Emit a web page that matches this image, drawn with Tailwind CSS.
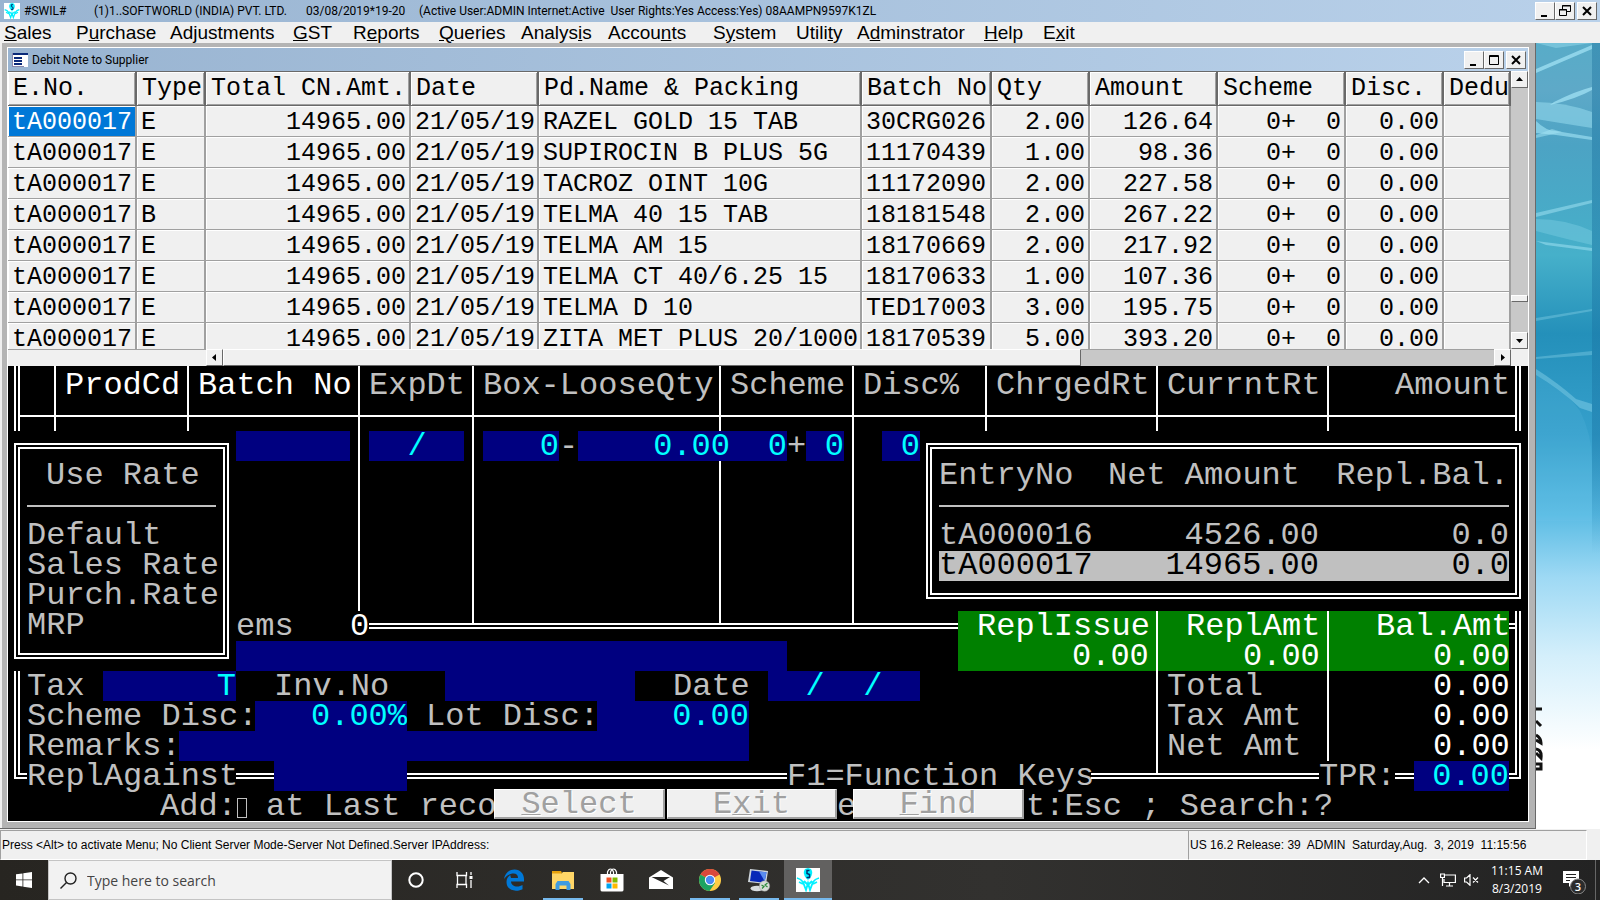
<!DOCTYPE html>
<html lang="en">
<head>
<meta charset="utf-8">
<title>#SWIL# - Debit Note to Supplier</title>
<script src="https://cdn.jsdelivr.net/npm/@tailwindcss/browser@4"></script>
</head>
<body class="flex min-h-screen flex-col overflow-hidden bg-[#f0f0f0] text-black">

<svg class="hidden">
  <symbol id="swil" viewBox="0 0 24 24">
    <rect width="24" height="24" fill="#fff"/>
    <path d="M9 1q-3 4 1 9l2 2 2-2q4-5 1-9l-3-1z" fill="#00f0ff"/>
    <path d="M13.500 2.500h-2.500v3l2.500 1v3h-3" fill="none" stroke="#003070" stroke-width="1.500"/>
    <path d="M1 10q4 1 6 4l3 8 2-7 2 7 3-8q2-3 6-4M3 14l4 2M21 14l-4 2M8 13l3 3M16 13l-3 3" fill="none" stroke="#00f0ff" stroke-width="1.800"/>
  </symbol>
</svg>

<!-- application title bar -->
<header class="flex h-[22px] items-center bg-linear-to-r from-[#99b4d1] to-[#b9d1ea] pl-1 pr-[3px] font-[Roboto,sans-serif] text-[12px]">
  <svg class="mr-1 size-4"><use href="#swil"/></svg>
  <span class="w-[70px]">#SWIL#</span>
  <span class="w-[212px] whitespace-nowrap">(1)1..SOFTWORLD (INDIA) PVT. LTD.</span>
  <span class="w-[113px]">03/08/2019*19-20</span>
  <span class="flex-1 whitespace-pre">(Active User:ADMIN Internet:Active  User Rights:Yes Access:Yes) 08AAMPN9597K1ZL</span>
  <button aria-label="Minimize" class="flex h-[18px] w-5 border border-t-white border-l-white border-r-[#696969] border-b-[#696969] bg-[#f0f0f0]"><svg viewBox="0 0 18 16"><path d="M5 12h6v2H5z"/></svg></button>
  <button aria-label="Restore" class="mr-0.5 flex h-[18px] w-5 border border-t-white border-l-white border-r-[#696969] border-b-[#696969] bg-[#f0f0f0]"><svg viewBox="0 0 18 16"><path d="M6.500 6V2.500h8v6H11M6 3h9M3.500 6.500h7v6h-7zM3 7h8" fill="none" stroke="#000"/></svg></button>
  <button aria-label="Close" class="flex h-[18px] w-5 border border-t-white border-l-white border-r-[#696969] border-b-[#696969] bg-[#f0f0f0]"><svg viewBox="0 0 18 16"><path d="M5 4l8 8M13 4l-8 8" stroke="#000" stroke-width="2"/></svg></button>
</header>

<!-- main menu -->
<nav class="flex h-[21px] items-center pl-1 font-['Liberation_Sans',sans-serif] text-[19px] leading-5">
  <a href="#" class="w-[72px]"><u>S</u>ales</a>
  <a href="#" class="w-[94px]">P<u>u</u>rchase</a>
  <a href="#" class="w-[123px]">Ad<u>j</u>ustments</a>
  <a href="#" class="w-[60px]"><u>G</u>ST</a>
  <a href="#" class="w-[86px]">R<u>e</u>ports</a>
  <a href="#" class="w-[82px]"><u>Q</u>ueries</a>
  <a href="#" class="w-[87px]">Analys<u>i</u>s</a>
  <a href="#" class="w-[105px]">Accou<u>n</u>ts</a>
  <a href="#" class="w-[83px]">S<u>y</u>stem</a>
  <a href="#" class="w-[61px]">Utili<u>t</u>y</a>
  <a href="#" class="w-[127px]">A<u>d</u>minstrator</a>
  <a href="#" class="w-[59px]"><u>H</u>elp</a>
  <a href="#">E<u>x</u>it</a>
</nav>

<!-- desktop with the child window -->
<main class="relative flex flex-1">
  <svg class="absolute inset-y-0 right-0 h-full w-16" viewBox="0 0 64 786" preserveAspectRatio="none">
    <defs>
      <linearGradient id="sky" x1="0" y1="0" x2="0" y2="1">
        <stop offset="0" stop-color="#58acc8"/><stop offset=".06" stop-color="#5ea9c8"/><stop offset=".13" stop-color="#4ca3c4"/>
        <stop offset=".27" stop-color="#46b0ca"/><stop offset=".37" stop-color="#2490ba"/><stop offset=".5" stop-color="#36a0cc"/>
        <stop offset=".6" stop-color="#5bbce4"/><stop offset=".68" stop-color="#9ed9f4"/><stop offset=".78" stop-color="#d4effb"/><stop offset=".9" stop-color="#fff"/>
      </linearGradient>
      <linearGradient id="edge" x1="0" y1="0" x2="0" y2="1">
        <stop offset="0" stop-color="#1a6f9c" stop-opacity=".4"/><stop offset=".5" stop-color="#1a78a8" stop-opacity=".5"/><stop offset=".65" stop-color="#1a78a8" stop-opacity="0"/>
      </linearGradient>
    </defs>
    <rect width="64" height="786" fill="url(#sky)"/>
    <g fill="#a5e6f6">
      <path d="M0 26L56 2v4L0 30z" opacity=".7"/><path d="M0 0h56L20 5z" opacity=".4"/>
      <path d="M18 59Q40 48 56 44v3Q40 56 14 62z" opacity=".7"/>
      <path d="M0 59q28 0 56 10v16Q24 80 0 76z" opacity=".45"/>
      <path d="M0 78q10 10 20 10l36 6v3L20 92 0 90z" opacity=".6"/><path d="M0 92l16-6 10 3-26 6z" opacity=".5"/>
      <path d="M0 170L56 157v3L0 174z" opacity=".5"/><path d="M0 176q30 0 56 12v14Q30 196 0 188z" opacity=".25"/>
      <path d="M0 198l56 7v3L10 202z" opacity=".5"/><path d="M0 275l56-9v2L0 278zM0 314l56-6v4L0 316z" opacity=".3"/>
      <path d="M0 326q22 14 40 30l16 5v8l-12-4Q24 346 0 332z" opacity=".35"/>
    </g>
    <path d="M0 332q30 16 44 36 12 24 12 50v60H0z" fill="#7fd0ee" opacity=".12"/>
    <rect x="56" width="8" height="786" fill="url(#edge)"/>
    <g fill="none" stroke="#111" stroke-width="3"><path d="M0 666h6M0 678l5 5M0 692q5 3 5 8l-5-3M0 706q6 1 5 9l-5-5M0 721h5v5H0"/></g>
  </svg>

  <section class="relative mr-16 flex min-w-0 flex-1 flex-col border-r border-b border-[#696969] bg-[#b4b4b4] pr-1.5 pb-1.5 shadow-[inset_2px_0_#efefef]">
    <div class="mt-1 ml-[7px] flex flex-1 flex-col border border-white">

      <div class="flex h-[23px] items-center bg-linear-to-r from-[#99b4d1] to-[#b9d1ea] pl-1 pr-0.5 font-[Roboto,sans-serif] text-[12px]">
        <svg class="mr-1 h-[14px] w-4" viewBox="0 0 16 14"><rect width="16" height="14" fill="#fff"/><path d="M0 0h16v2H0z" fill="#0a2a7a"/><path d="M0 0h1v14H0zM0 13h12v1H0z" fill="#88a"/><path d="M2 4h8v2H2zM2 7h8v2H2zM2 10h8v2H2z" fill="#0a2a7a"/></svg>
        <h1 class="flex-1">Debit Note to Supplier</h1>
        <button aria-label="Minimize window" class="flex h-[18px] w-5 border border-t-white border-l-white border-r-[#696969] border-b-[#696969] bg-[#f0f0f0]"><svg viewBox="0 0 18 16"><path d="M5 12h6v2H5z"/></svg></button>
        <button aria-label="Maximize window" class="mr-0.5 flex h-[18px] w-5 border border-t-white border-l-white border-r-[#696969] border-b-[#696969] bg-[#f0f0f0]"><svg viewBox="0 0 18 16"><path d="M4.500 3.500h9v9h-9zM4 4.500h10" fill="none" stroke="#000"/></svg></button>
        <button aria-label="Close window" class="flex h-[18px] w-5 border border-t-white border-l-white border-r-[#696969] border-b-[#696969] bg-[#f0f0f0]"><svg viewBox="0 0 18 16"><path d="M5 4l8 8M13 4l-8 8" stroke="#000" stroke-width="2"/></svg></button>
      </div>

      <!-- browse list -->
      <div class="flex h-[278px] bg-[#f0f0f0]">
        <div class="min-w-0 flex-1 overflow-hidden">
          <table class="w-full table-fixed border-separate border-spacing-0 whitespace-pre font-['Liberation_Mono',monospace] text-[25px] leading-[27px] [&_td]:h-[31px] [&_td]:border-r-2 [&_td]:border-b [&_td]:border-[#a0a0a0] [&_td]:pt-[3px] [&_td]:pb-0 [&_td]:pr-[3px] [&_td]:pl-1 [&_td]:shadow-[inset_1px_1px_#fff] [&_th]:h-[35px] [&_th]:border-r-2 [&_th]:border-y [&_th]:border-[#696969] [&_th]:py-0 [&_th]:pr-0 [&_th]:pl-[5px] [&_th]:text-left [&_th]:font-normal [&_th]:shadow-[inset_1px_1px_#fff,inset_-1px_-1px_#a0a0a0]">
            <colgroup><col class="w-[129px]"><col class="w-[69px]"><col class="w-[205px]"><col class="w-[128px]"><col class="w-[323px]"><col class="w-[130px]"><col class="w-[98px]"><col class="w-[128px]"><col class="w-[128px]"><col class="w-[98px]"><col></colgroup>
            <thead><tr><th>E.No.</th><th>Type</th><th>Total CN.Amt.</th><th>Date</th><th>Pd.Name &amp; Packing</th><th>Batch No</th><th>Qty</th><th>Amount</th><th>Scheme</th><th>Disc.</th><th>Dedu</th></tr></thead>
            <tbody class="[&_td:nth-child(3)]:text-right [&_td:nth-child(7)]:text-right [&_td:nth-child(8)]:text-right [&_td:nth-child(9)]:text-right [&_td:nth-child(10)]:text-right">
              <tr><td class="bg-[#0078d7] text-white">tA000017</td><td>E</td><td>14965.00</td><td>21/05/19</td><td>RAZEL GOLD 15 TAB</td><td>30CRG026</td><td>2.00</td><td>126.64</td><td>0+  0</td><td>0.00</td><td></td></tr>
              <tr><td>tA000017</td><td>E</td><td>14965.00</td><td>21/05/19</td><td>SUPIROCIN B PLUS 5G</td><td>11170439</td><td>1.00</td><td>98.36</td><td>0+  0</td><td>0.00</td><td></td></tr>
              <tr><td>tA000017</td><td>E</td><td>14965.00</td><td>21/05/19</td><td>TACROZ OINT 10G</td><td>11172090</td><td>2.00</td><td>227.58</td><td>0+  0</td><td>0.00</td><td></td></tr>
              <tr><td>tA000017</td><td>B</td><td>14965.00</td><td>21/05/19</td><td>TELMA 40 15 TAB</td><td>18181548</td><td>2.00</td><td>267.22</td><td>0+  0</td><td>0.00</td><td></td></tr>
              <tr><td>tA000017</td><td>E</td><td>14965.00</td><td>21/05/19</td><td>TELMA AM 15</td><td>18170669</td><td>2.00</td><td>217.92</td><td>0+  0</td><td>0.00</td><td></td></tr>
              <tr><td>tA000017</td><td>E</td><td>14965.00</td><td>21/05/19</td><td>TELMA CT 40/6.25 15</td><td>18170633</td><td>1.00</td><td>107.36</td><td>0+  0</td><td>0.00</td><td></td></tr>
              <tr><td>tA000017</td><td>E</td><td>14965.00</td><td>21/05/19</td><td>TELMA D 10</td><td>TED17003</td><td>3.00</td><td>195.75</td><td>0+  0</td><td>0.00</td><td></td></tr>
              <tr><td>tA000017</td><td>E</td><td>14965.00</td><td>21/05/19</td><td>ZITA MET PLUS 20/1000</td><td>18170539</td><td>5.00</td><td>393.20</td><td>0+  0</td><td>0.00</td><td></td></tr>
            </tbody>
          </table>
        </div>
        <div class="flex w-[17px] flex-col bg-[#c8c8c8]">
          <button aria-label="Scroll up" class="h-[17px] border border-t-white border-l-white border-r-[#696969] border-b-[#696969] bg-[#f0f0f0]"><svg viewBox="0 0 15 15"><path d="M4 9h7L7.500 5z"/></svg></button>
          <div class="flex-1"></div>
          <div class="h-[7px] border border-t-white border-l-white border-r-[#696969] border-b-[#696969] bg-[#f0f0f0]"></div>
          <div class="h-[30px]"></div>
          <button aria-label="Scroll down" class="h-[17px] border border-t-white border-l-white border-r-[#696969] border-b-[#696969] bg-[#f0f0f0]"><svg viewBox="0 0 15 15"><path d="M4 6h7l-3.500 4z"/></svg></button>
        </div>
      </div>
      <div class="flex h-[17px] bg-[#c8c8c8]">
        <div class="w-[198px] border-t border-[#a0a0a0] bg-[#f0f0f0]"></div>
        <button aria-label="Scroll left" class="w-[17px] border border-t-white border-l-white border-r-[#696969] border-b-[#696969] bg-[#f0f0f0]"><svg viewBox="0 0 15 15"><path d="M9 4v7L5 7.500z"/></svg></button>
        <div class="w-[858px] border border-t-white border-l-white border-r-[#696969] border-b-[#696969] bg-[#f0f0f0]"></div>
        <div class="flex-1 border-t border-[#a0a0a0]"></div>
        <button aria-label="Scroll right" class="w-[17px] border border-t-white border-l-white border-r-[#696969] border-b-[#696969] bg-[#f0f0f0]"><svg viewBox="0 0 15 15"><path d="M6 4v7l4-3.500z"/></svg></button>
        <div class="w-[17px] bg-[#f0f0f0]"></div>
      </div>

      <!-- text-mode entry form: 80 character columns -->
      <form class="grid flex-1 grid-cols-[repeat(80,minmax(0,1fr))] grid-rows-[35px_repeat(14,30px)] bg-black whitespace-pre font-['Liberation_Mono',monospace] text-[32px] leading-[30px] text-[#c0c0c0] [&_input]:h-[30px] [&_input]:w-full [&_input]:min-w-0 [&_input]:bg-[#000080] [&_input]:text-right [&_input]:text-[#00ffff] [&>label]:pt-px [&>span]:pt-px">
        <i class="col-[1] row-[1/3] ml-1.5 w-1.5 border-x-2 border-white"></i>
        <i class="col-[3] row-[1/3] ml-2 w-0.5 bg-white"></i>
        <i class="col-[10] row-[1/3] ml-2 w-0.5 bg-white"></i>
        <i class="col-[19] row-[1/9] ml-2 w-0.5 bg-white"></i>
        <i class="col-[25] row-[1/10] mb-[17px] ml-2 w-0.5 bg-white"></i>
        <i class="col-[38] row-[1/10] mb-[17px] ml-2 w-0.5 bg-white"></i>
        <i class="col-[45] row-[1/10] mb-[17px] ml-2 w-0.5 bg-white"></i>
        <i class="col-[52] row-[1/3] ml-2 w-0.5 bg-white"></i>
        <i class="col-[61] row-[1/3] ml-2 w-0.5 bg-white"></i>
        <i class="col-[70] row-[1/3] ml-2 w-0.5 bg-white"></i>
        <i class="col-[80] row-[1/3] ml-1.5 w-1.5 border-x-2 border-white"></i>
        <i class="col-[1/81] row-[2] mx-3 h-0.5 self-center bg-white"></i>

        <span class="col-[4/10] row-[1] self-end text-white">ProdCd</span>
        <span class="col-[11/19] row-[1] self-end text-white">Batch No</span>
        <span class="col-[20/25] row-[1] self-end">ExpDt</span>
        <span class="col-[26/38] row-[1] self-end">Box-LooseQty</span>
        <span class="col-[39/45] row-[1] self-end">Scheme</span>
        <span class="col-[46/52] row-[1] self-end">Disc%</span>
        <span class="col-[53/61] row-[1] self-end">ChrgedRt</span>
        <span class="col-[62/70] row-[1] self-end">CurrntRt</span>
        <span class="col-[74/80] row-[1] self-end">Amount</span>

        <input aria-label="Batch No" class="col-[13/19] row-[3]">
        <input aria-label="ExpDt" value="  /  " class="col-[20/25] row-[3] text-center!">
        <input aria-label="Box" value="0" class="col-[26/30] row-[3]">
        <span class="col-[30] row-[3]">-</span>
        <input aria-label="Loose quantity" value="0.00" class="col-[31/39] row-[3]">
        <input aria-label="Scheme" value="0" class="col-[39/42] row-[3]">
        <span class="col-[42] row-[3]">+</span>
        <input aria-label="Scheme free" value="0" class="col-[43/45] row-[3]">
        <input aria-label="Disc%" value="0" class="col-[47/49] row-[3]">

        <i class="col-[20/51] row-[9] h-1.5 self-center border-y-2 border-white bg-black"></i>
        <span class="col-[13/16] row-[9]">ems</span>
        <span class="col-[19] row-[9] text-white">0</span>
        <input aria-label="Item" class="col-[13/42] row-[10]">

        <i class="col-[1] row-[11/15] mb-3 ml-1.5 border-b-2 border-l-2 border-white"></i>
        <i class="col-[1] row-[11/15] mb-4 ml-2.5 border-b-2 border-l-2 border-white"></i>
        <i class="col-[80] row-[9/15] mr-[7px] mb-3 border-r-2 border-b-2 border-white"></i>
        <i class="col-[80] row-[9/15] mr-[11px] mb-4 border-r-2 border-b-2 border-white"></i>
        <i class="col-[80] row-[9] mr-[11px] h-1.5 self-center border-y-2 border-white"></i>

        <div class="col-[51/80] row-[9/11] bg-[#008000]"></div>
        <i class="col-[61] row-[9/15] mb-[18px] ml-2 w-0.5 bg-white"></i>
        <i class="col-[70] row-[9/14] ml-2 w-0.5 bg-white"></i>
        <span class="col-[52/61] row-[9] text-white">ReplIssue</span>
        <span class="col-[63/70] row-[9] text-white">ReplAmt</span>
        <span class="col-[73/80] row-[9] text-white">Bal.Amt</span>
        <span class="col-[57/61] row-[10] text-white">0.00</span>
        <span class="col-[66/70] row-[10] text-white">0.00</span>
        <span class="col-[76/80] row-[10] text-white">0.00</span>
        <span class="col-[62/69] row-[11]">Total</span>
        <span class="col-[76/80] row-[11] text-white">0.00</span>
        <span class="col-[62/69] row-[12]">Tax Amt</span>
        <span class="col-[76/80] row-[12] text-white">0.00</span>
        <span class="col-[62/69] row-[13]">Net Amt</span>
        <span class="col-[76/80] row-[13] text-white">0.00</span>

        <label for="tax" class="col-[2/5] row-[11]">Tax</label>
        <input id="tax" value="T" class="col-[6/13] row-[11]">
        <label for="inv" class="col-[15/21] row-[11]">Inv.No</label>
        <input id="inv" class="col-[24/34] row-[11]">
        <label for="date" class="col-[36/40] row-[11]">Date</label>
        <input id="date" value="/  /" class="col-[41/49] row-[11] text-center!">
        <label for="sdisc" class="col-[2/14] row-[12]">Scheme Disc:</label>
        <input id="sdisc" value="0.00%" class="col-[14/22] row-[12]">
        <label for="ldisc" class="col-[23/32] row-[12]">Lot Disc:</label>
        <input id="ldisc" value="0.00" class="col-[32/40] row-[12]">
        <label for="rem" class="col-[2/10] row-[13]">Remarks:</label>
        <input id="rem" class="col-[10/40] row-[13]">
        <label for="repl" class="col-[2/13] row-[14]">ReplAgainst</label>
        <i class="col-[13/15] row-[14] h-1.5 self-center border-y-2 border-white"></i>
        <input id="repl" class="col-[15/22] row-[14]">
        <i class="col-[22/42] row-[14] h-1.5 self-center border-y-2 border-white"></i>
        <span class="col-[42/58] row-[14]">F1=Function Keys</span>
        <i class="col-[58/70] row-[14] h-1.5 self-center border-y-2 border-white"></i>
        <label for="tpr" class="col-[70/74] row-[14]">TPR:</label>
        <i class="col-[74] row-[14] h-1.5 self-center border-y-2 border-white"></i>
        <input id="tpr" value="0.00" class="col-[75/80] row-[14]">

        <!-- hint line and command buttons -->
        <div class="col-[9/81] row-[15] flex min-w-0">
          <span class="flex w-[334px] items-start overflow-hidden pt-px">Add:<i class="mt-1.5 h-5 w-[10px] shrink-0 border border-[#c0c0c0]"></i> at Last reco</span>
          <button type="button" class="mt-[-2px] h-[30px] w-[171px] border-t border-l border-r-2 border-b-2 border-t-white border-l-white border-r-[#a0a0a0] border-b-[#a0a0a0] bg-[#f0f0f0] text-[#a0a0a0] text-shadow-[1px_1px_#fff]"><span class="underline decoration-1">S</span>elect</button>
          <button type="button" class="mt-[-2px] ml-0.5 h-[30px] w-[170px] border-t border-l border-r-2 border-b-2 border-t-white border-l-white border-r-[#a0a0a0] border-b-[#a0a0a0] bg-[#f0f0f0] text-[#a0a0a0] text-shadow-[1px_1px_#fff]">E<span class="underline decoration-1">x</span>it</button>
          <span class="w-4 overflow-hidden pt-px">e</span>
          <button type="button" class="mt-[-2px] h-[30px] w-[171px] border-t border-l border-r-2 border-b-2 border-t-white border-l-white border-r-[#a0a0a0] border-b-[#a0a0a0] bg-[#f0f0f0] text-[#a0a0a0] text-shadow-[1px_1px_#fff]"><span class="underline decoration-1">F</span>ind</button>
          <span class="pt-px pl-0.5">t:Esc ; Search:?</span>
        </div>

        <!-- rate menu -->
        <div class="col-[1/13] row-[3/11] bg-black pt-3 pr-[7px] pb-3 pl-1.5 whitespace-nowrap">
          <div class="flex h-full flex-col border-6 border-double border-white px-[7px] pt-3">
            <span class="pl-[19px]">Use Rate</span>
            <hr class="my-3.5 border-t-2 border-[#c0c0c0]">
            <span>Default</span><span>Sales Rate</span><span>Purch.Rate</span><span>MRP</span>
          </div>
        </div>

        <!-- entry list -->
        <div class="col-[49/81] row-[3/9] bg-black pt-3 pr-[7px] pb-3 pl-1.5 whitespace-nowrap">
          <div class="h-full border-6 border-double border-white pt-3 pr-1.5 pl-[7px]">
            <table class="w-full table-fixed [&_td]:p-0 [&_th]:p-0 [&_th]:font-normal">
              <colgroup><col class="w-[152px]"><col class="w-[228px]"><col></colgroup>
              <thead><tr class="text-right"><th class="text-left">EntryNo</th><th class="pr-[19px]!">Net Amount</th><th>Repl.Bal.</th></tr></thead>
              <tbody class="text-right">
                <tr><td colspan="3" class="h-[30px]"><hr class="border-t-2 border-[#c0c0c0]"></td></tr>
                <tr><td class="text-left">tA000016</td><td>4526.00</td><td>0.0</td></tr>
                <tr class="bg-[#c0c0c0] text-black"><td class="text-left">tA000017</td><td>14965.00</td><td>0.0</td></tr>
              </tbody>
            </table>
          </div>
        </div>
      </form>
    </div>
  </section>
</main>

<!-- status bar -->
<footer class="flex h-[31px] items-center border-t border-[#f0f0f0] bg-[#f0f0f0] pr-[13px] font-['Liberation_Sans',sans-serif] text-[12px] whitespace-pre">
  <span class="flex h-full flex-1 items-center border-t border-l border-b border-t-[#a0a0a0] border-l-[#a0a0a0] border-b-white pl-px">Press &lt;Alt&gt; to activate Menu; No Client Server Mode-Server Not Defined.Server IPAddress:</span>
  <span class="flex h-full w-[399px] items-center border border-t-[#a0a0a0] border-l-[#a0a0a0] border-r-white border-b-white pl-px">US 16.2 Release: 39  ADMIN  Saturday,Aug.  3, 2019  11:15:56</span>
</footer>

<!-- taskbar -->
<div class="flex h-10 items-center bg-linear-to-r from-[#272521] via-[#32312f] via-62% to-[#232323] font-['Open_Sans',sans-serif] text-white">
  <button aria-label="Start" class="flex h-10 w-12 items-center justify-center"><svg class="size-4" viewBox="0 0 16 16" fill="#fff"><path d="M0 2.300l6.500-.900v6.100H0zM7.300 1.300L16 0v7.500H7.300zM0 8.300h6.500v6.200L0 13.600zM7.300 8.300H16V16l-8.700-1.300z"/></svg></button>
  <label class="flex h-10 w-[344px] items-center border border-[#c4c4c4] bg-[#f2f2f2] pl-[11px] text-[#333]">
    <svg class="mr-2.5 size-[17px]" viewBox="0 0 17 17" fill="none" stroke="#222" stroke-width="1.400"><circle cx="10.500" cy="6.500" r="5.500"/><path d="M6.500 10.500L.500 16.500"/></svg>
    <input aria-label="Search" placeholder="Type here to search" class="min-w-0 flex-1 text-[14px] placeholder:text-[#444]">
  </label>
  <div class="flex h-10 flex-1 [&>button]:mr-px [&>button]:flex [&>button]:h-10 [&>button]:w-12 [&>button]:items-center [&>button]:justify-center [&_svg]:size-6">
    <button aria-label="Cortana"><svg viewBox="0 0 24 24"><circle cx="12" cy="12" r="6.700" fill="none" stroke="#fff" stroke-width="2"/></svg></button>
    <button aria-label="Task view"><svg viewBox="0 0 24 24" fill="none" stroke="#fff" stroke-width="1.300"><path d="M4 4v3.500h9.500V4M4 20v-3.500h9.500V20M4.500 7.500v9M13 7.500v9M18 4v3M18 12v8"/><path d="M16.500 8h3v3h-3z" fill="#fff" stroke="none"/></svg></button>
    <button aria-label="Edge"><svg viewBox="0 0 24 24"><path d="M2 11C3 4.500 7.500 1.500 12.500 1.500c6 0 9.500 4.500 9.500 9.500v2.500H9c.2 3.500 3 5 6 5 2.200 0 4.200-.6 5.500-1.500v4.200c-1.500.9-3.700 1.500-6.500 1.500-5.500 0-9.500-3.200-9.500-8.700 0-3.500 1.800-6 4.500-7.300C7.500 7.800 9 9 9 10h7c0-3-1.500-4.500-4.500-4.500C8 5.500 4.500 7.500 2 11z" fill="#0078d7"/></svg></button>
    <button aria-label="File Explorer" class="bg-[linear-gradient(#76b9ed,#76b9ed)] bg-[length:40px_2px] bg-bottom bg-no-repeat"><svg viewBox="0 0 24 24"><path d="M1 3h9l1 2-1 1H1z" fill="#e8a20c"/><path d="M1 5.500h9.500L12 4h11v17H1z" fill="#ffd667"/><path d="M4.500 22v-6l2-3h11l2 3v6h-4v-4.500h-7V22z" fill="#3f9be0"/></svg></button>
    <button aria-label="Store"><svg viewBox="0 0 24 24"><path d="M7.500 6V4q1-3 3-3t3 3v2M10.500 6V4q1-3 3-3t3 3v2" fill="none" stroke="#fff" stroke-width="1.200"/><path d="M.500 6h23v16q0 1.500-2 1.500h-19q-2 0-2-1.500z" fill="#fff"/><path d="M6.500 9.500h5v5h-5z" fill="#f25022"/><path d="M12.500 9.500h5v5h-5z" fill="#7fba00"/><path d="M6.500 15.500h5v5h-5z" fill="#00a4ef"/><path d="M12.500 15.500h5v5h-5z" fill="#ffb900"/></svg></button>
    <button aria-label="Mail"><svg viewBox="0 0 24 24"><path d="M0 9.500L12 2l12 7.500V21H0z" fill="#fff"/><path d="M2.500 9h18.500l-6.500 4 5.500 4.500z" fill="#262523"/></svg></button>
    <button aria-label="Chrome" class="bg-[linear-gradient(#76b9ed,#76b9ed)] bg-[length:40px_2px] bg-bottom bg-no-repeat"><svg viewBox="0 0 24 24"><circle cx="12" cy="12" r="11" fill="#ffcd46"/><path d="M12 12L2.470 6.500A11 11 0 0 1 21.530 6.500z" fill="#d9483b"/><path d="M2.470 6.500A11 11 0 0 0 11.500 23L17 15l-5-3z" fill="#1da362"/><path d="M12 7h9.800a11 11 0 0 0-.3-.5L12 6z" fill="#d9483b"/><circle cx="12" cy="12" r="5.200" fill="#fff"/><circle cx="12" cy="12" r="4.200" fill="#4a8af4"/></svg></button>
    <button aria-label="Remote desktop" class="bg-[linear-gradient(#76b9ed,#76b9ed)] bg-[length:40px_2px] bg-bottom bg-no-repeat"><svg viewBox="0 0 24 24"><path d="M3 1l18 2-2 13L1 14z" fill="#cfd6dc"/><path d="M4.500 2.500l15 1.700-2 10.500L3 13z" fill="#0828b8"/><path d="M12 3.500l7.500.800-1.800 9z" fill="#5a8cf0"/><ellipse cx="10" cy="20.500" rx="6.500" ry="2.700" fill="#d8dcdf"/><circle cx="17.500" cy="18" r="5.200" fill="#d8dcd6" stroke="#999" stroke-width=".5"/><path d="M14.500 17l2.500 1.500-2 2M20.500 15L18 17l2.500 2" fill="none" stroke="#2c8a3a" stroke-width="1.200"/></svg></button>
    <button aria-label="SWIL" class="bg-[#626160] shadow-[inset_0_-2px_#76b9ed]"><svg><use href="#swil"/></svg></button>
  </div>
  <svg class="mr-2.5 h-2 w-3" viewBox="0 0 12 8" fill="none" stroke="#fff" stroke-width="1.300"><path d="M1 7l5-5 5 5"/></svg>
  <svg class="mr-2 h-[14px] w-4" viewBox="0 0 16 14" fill="none" stroke="#fff" stroke-width="1.200"><path d="M5 2h10.400v7.500H4V6M9.500 9.500V13M6 13h7M.600 1h3.800v3.500H.600zM2.500 4.500V13"/></svg>
  <svg class="mr-3 h-3 w-[15px]" viewBox="0 0 15 12" fill="none" stroke="#fff" stroke-width="1.200"><path d="M.600 4v4h2L6 11.300V.700L2.600 4zM9 3.500l5 5M14 3.500l-5 5"/></svg>
  <div class="mr-5 text-center text-[12px] leading-[18px]">11:15 AM<br>8/3/2019</div>
  <button aria-label="Notifications" class="mr-1 flex h-10 w-7 items-center"><svg viewBox="0 0 28 28"><path d="M0 5h16v12h-6l-4 4v-4H0z" fill="#fff"/><path d="M3 8.500h10M3 11.500h10M3 14.500h4" stroke="#232323"/><circle cx="15" cy="20.500" r="7.500" fill="#2b2b2b" stroke="#888"/><text x="15" y="24.500" text-anchor="middle" font-family="Open Sans" font-size="11" font-weight="600" fill="#fff">3</text></svg></button>
  <div class="h-10 w-[5px] border-l border-[#666]"></div>
</div>
</body>
</html>
